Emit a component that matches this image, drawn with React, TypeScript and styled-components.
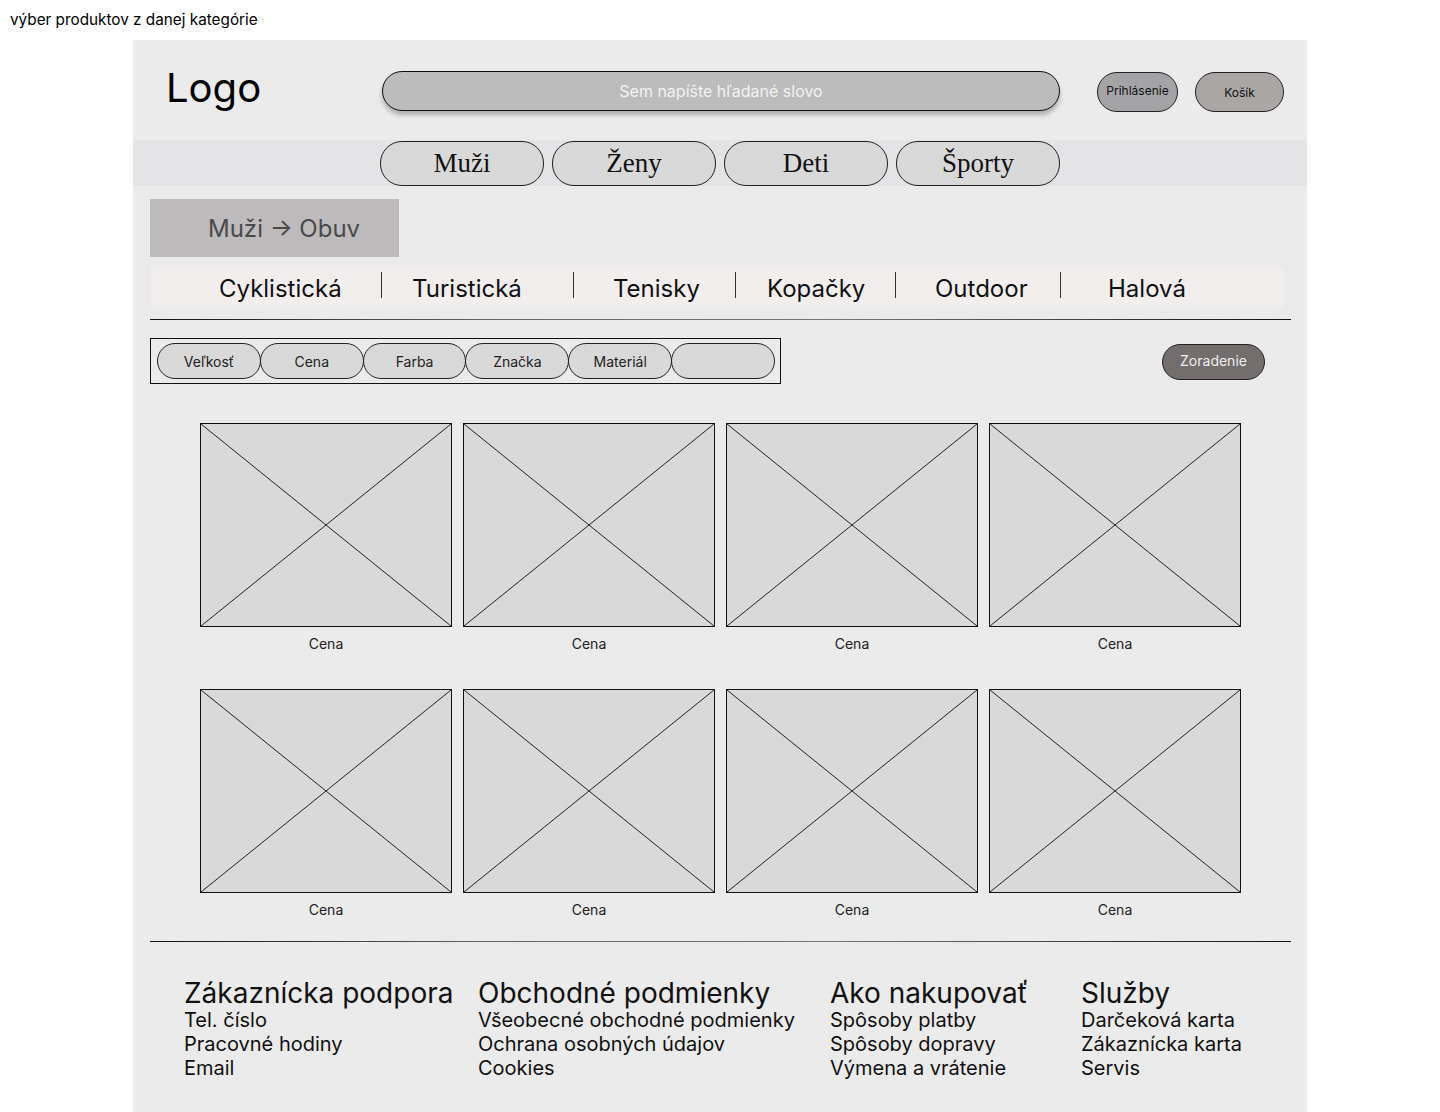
import React from 'react';
import styled, { createGlobalStyle } from 'styled-components';

const GlobalStyle = createGlobalStyle`
  body {
    margin: 0;
    background: #ffffff;
    font-family: 'Inter', 'Liberation Sans', sans-serif;
    color: #000;
  }
`;

const Caption = styled.div`
  padding: 11px 10px 0;
  height: 40px;
  box-sizing: border-box;
  font-size: 15.3px;
  line-height: 18px;
`;

const Frame = styled.div`
  margin-left: 133px;
  width: 1174px;
  min-height: 1072px;
  background: #ebebeb;
`;

const Header = styled.div`
  display: flex;
  align-items: center;
  height: 100px;
  padding-left: 33px;
`;

const Logo = styled.div`
  width: 216px;
  font-size: 40px;
  line-height: 48px;
  margin-top: -4px;
`;

const Search = styled.div`
  width: 678px;
  height: 40px;
  box-sizing: border-box;
  display: flex;
  align-items: center;
  justify-content: center;
  background: #bcbcbc;
  border: 1px solid #111;
  border-radius: 20px;
  box-shadow: 0 4px 4px rgba(0, 0, 0, 0.25);
  color: #f2f2f2;
  font-size: 16px;
  margin-top: 2px;
`;

const HeaderButton = styled.div<{ $w: number; $bg: string; $ml: number; $top?: boolean }>`
  width: ${p => p.$w}px;
  height: 40px;
  margin-left: ${p => p.$ml}px;
  box-sizing: border-box;
  display: flex;
  justify-content: center;
  align-items: ${p => (p.$top ? 'flex-start' : 'center')};
  padding-top: ${p => (p.$top ? '10px' : '2px')};
  background: ${p => p.$bg};
  border: 1px solid #222;
  border-radius: 20px;
  font-size: 12px;
  color: #111;
  margin-top: 3px;
`;

const NavBand = styled.div`
  display: flex;
  gap: 8px;
  height: 46px;
  padding-left: 247px;
  background: #e4e3e6;
`;

const NavButton = styled.div`
  width: 164px;
  height: 45px;
  box-sizing: border-box;
  margin-top: 1px;
  display: flex;
  align-items: center;
  justify-content: center;
  background: #d9d9d9;
  border: 1px solid #222;
  border-radius: 22px;
  font-family: 'Liberation Serif', 'DejaVu Serif', serif;
  font-size: 27px;
  color: #111;
`;

const Content = styled.div`
  padding-left: 17px;
`;

const Breadcrumb = styled.div`
  margin-top: 13px;
  width: 249px;
  height: 58px;
  box-sizing: border-box;
  padding-left: 58px;
  display: flex;
  align-items: center;
  background: #bdbbbc;
  color: #4a4a4a;
  font-size: 24px;
`;

const Categories = styled.div`
  margin-top: 10px;
  width: 1134px;
  height: 40px;
  display: flex;
  background: #f3eeee;
`;

const Category = styled.div<{ $w: number; $pad: number; $sep: boolean }>`
  position: relative;
  width: ${p => p.$w}px;
  padding-left: ${p => p.$pad}px;
  box-sizing: border-box;
  display: flex;
  align-items: center;
  font-size: 24px;
  color: #111;
  padding-top: 2px;

  &::before {
    content: '';
    display: ${p => (p.$sep ? 'block' : 'none')};
    position: absolute;
    left: 0;
    top: 5px;
    height: 26px;
    width: 1px;
    background: #333;
  }
`;

const Rule = styled.div<{ $mt: number }>`
  margin-top: ${p => p.$mt}px;
  width: 1141px;
  height: 1px;
  background: linear-gradient(90deg, #111 0%, #666 30%, #777 60%, #111 100%);
`;

const FilterRow = styled.div`
  margin-top: 18px;
  width: 1115px;
  display: flex;
  align-items: center;
  justify-content: space-between;
`;

const FilterBox = styled.div`
  width: 631px;
  height: 46px;
  box-sizing: border-box;
  border: 1px solid #111;
  padding: 4px 6px;
  display: flex;
`;

const Pill = styled.div`
  width: 104px;
  height: 36px;
  margin-right: -1px;
  box-sizing: border-box;
  display: flex;
  align-items: center;
  justify-content: center;
  background: #d9d9d9;
  border: 1px solid #222;
  border-radius: 18px;
  font-size: 14px;
  color: #222;
`;

const SortButton = styled(Pill)`
  width: 103px;
  margin-right: 0;
  margin-top: 1px;
  background: #736d6d;
  color: #eeeeee;
  padding-bottom: 2px;
`;

const Grid = styled.div`
  margin-top: 39px;
  padding-left: 50px;
  display: grid;
  grid-template-columns: repeat(4, 252px);
  column-gap: 11px;
  row-gap: 37px;
`;

const Card = styled.div`
  display: flex;
  flex-direction: column;
  align-items: center;
`;

const ImageBox = styled.div`
  width: 100%;
  height: 204px;
  box-sizing: border-box;
  background: #d9d9d9;
  border: 1px solid #111;

  svg {
    display: block;
    width: 100%;
    height: 100%;
  }
`;

const Price = styled.div`
  margin-top: 8px;
  font-size: 14px;
  line-height: 17px;
  color: #222;
`;

const Footer = styled.div`
  display: flex;
  padding: 36px 0 0 51px;
`;

const FooterColumn = styled.div<{ $w: number }>`
  width: ${p => p.$w}px;
  display: flex;
  flex-direction: column;
`;

const FooterTitle = styled.div`
  font-size: 28px;
  line-height: 30px;
  color: #111;
`;

const FooterLink = styled.div`
  font-size: 20px;
  line-height: 24px;
  color: #111;
`;

const categories = [
  { label: 'Cyklistická', w: 231, pad: 69 },
  { label: 'Turistická', w: 192, pad: 31 },
  { label: 'Tenisky', w: 162, pad: 40 },
  { label: 'Kopačky', w: 160, pad: 32 },
  { label: 'Outdoor', w: 165, pad: 40 },
  { label: 'Halová', w: 224, pad: 48 },
];

const filters = ['Veľkosť', 'Cena', 'Farba', 'Značka', 'Materiál', ''];

const footer = [
  { title: 'Zákaznícka podpora', w: 294, links: ['Tel. číslo', 'Pracovné hodiny', 'Email'] },
  {
    title: 'Obchodné podmienky',
    w: 352,
    links: ['Všeobecné obchodné podmienky', 'Ochrana osobných údajov', 'Cookies'],
  },
  { title: 'Ako nakupovať', w: 251, links: ['Spôsoby platby', 'Spôsoby dopravy', 'Výmena a vrátenie'] },
  { title: 'Služby', w: 220, links: ['Darčeková karta', 'Zákaznícka karta', 'Servis'] },
];

const Placeholder = () => (
  <ImageBox>
    <svg viewBox="0 0 100 100" preserveAspectRatio="none">
      <line x1="0" y1="0" x2="100" y2="100" stroke="#222" strokeWidth="1" vectorEffect="non-scaling-stroke" />
      <line x1="100" y1="0" x2="0" y2="100" stroke="#222" strokeWidth="1" vectorEffect="non-scaling-stroke" />
    </svg>
  </ImageBox>
);

const App = () => {
  return (
    <>
      <GlobalStyle />
      <Caption>výber produktov z danej kategórie</Caption>
      <Frame>
        <Header>
          <Logo>Logo</Logo>
          <Search>Sem napíšte hľadané slovo</Search>
          <HeaderButton $w={81} $bg="#a4a4a7" $ml={37} $top>
            Prihlásenie
          </HeaderButton>
          <HeaderButton $w={89} $bg="#aaa6a5" $ml={17}>
            Košík
          </HeaderButton>
        </Header>

        <NavBand>
          <NavButton>Muži</NavButton>
          <NavButton>Ženy</NavButton>
          <NavButton>Deti</NavButton>
          <NavButton>Športy</NavButton>
        </NavBand>

        <Content>
          <Breadcrumb>Muži → Obuv</Breadcrumb>

          <Categories>
            {categories.map((c, i) => (
              <Category key={c.label} $w={c.w} $pad={c.pad} $sep={i > 0}>
                {c.label}
              </Category>
            ))}
          </Categories>

          <Rule $mt={12} />

          <FilterRow>
            <FilterBox>
              {filters.map((f, i) => (
                <Pill key={i}>{f}</Pill>
              ))}
            </FilterBox>
            <SortButton>Zoradenie</SortButton>
          </FilterRow>

          <Grid>
            {Array.from({ length: 8 }).map((_, i) => (
              <Card key={i}>
                <Placeholder />
                <Price>Cena</Price>
              </Card>
            ))}
          </Grid>

          <Rule $mt={23} />
        </Content>

        <Footer>
          {footer.map(col => (
            <FooterColumn key={col.title} $w={col.w}>
              <FooterTitle>{col.title}</FooterTitle>
              {col.links.map(l => (
                <FooterLink key={l}>{l}</FooterLink>
              ))}
            </FooterColumn>
          ))}
        </Footer>
      </Frame>
    </>
  );
};

export default App;
